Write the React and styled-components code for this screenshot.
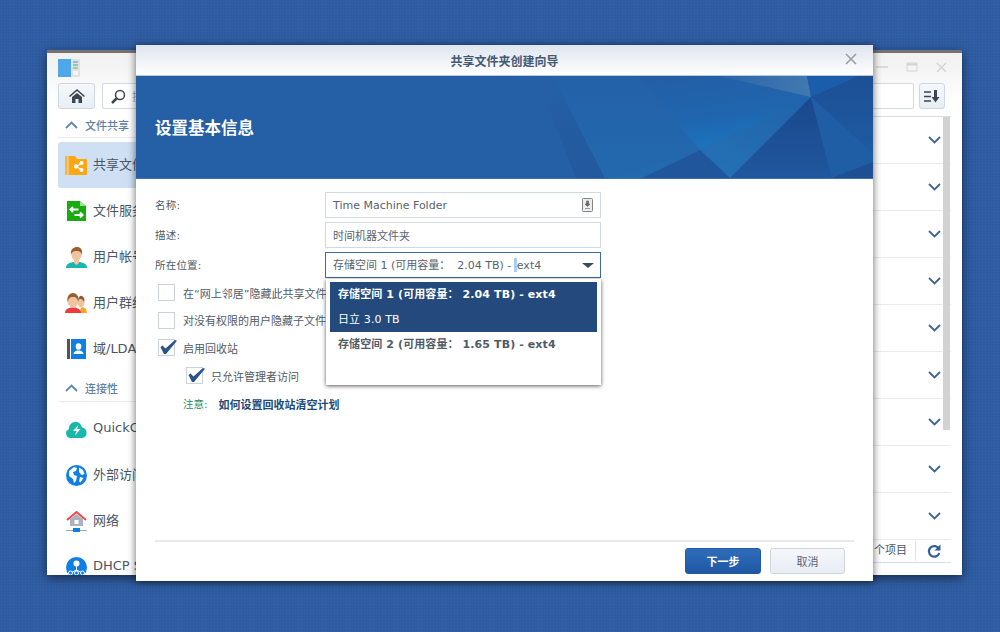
import React from "react";
import styled, { createGlobalStyle } from "styled-components";

const Global = createGlobalStyle`
  html, body { margin: 0; padding: 0; height: 100%; }
  body { font-family: "DejaVu Sans", "Noto Sans CJK SC", sans-serif; overflow: hidden; }
  #root { height: 100%; }
`;

const Desktop = styled.div`
  position: relative;
  width: 1000px;
  height: 632px;
  overflow: hidden;
  background-color: #2d5ba1;
  background-image: radial-gradient(rgba(255,255,255,.025) 1px, transparent 1.2px);
  background-size: 3px 3px;
`;

const BackWindow = styled.section`
  position: absolute;
  left: 47px;
  top: 50px;
  width: 915px;
  height: 525px;
  box-sizing: border-box;
  border-top: 3px solid #737373;
  background: linear-gradient(#f0f0f0, #fff 50px);
  box-shadow: 0 3px 10px rgba(0,0,0,.55);
  display: flex;
  flex-direction: column;
  overflow: hidden;
`;
const WinHeader = styled.header`
  height: 30px;
  flex: none;
  display: flex;
  align-items: center;
  justify-content: space-between;
  padding: 0 15px 0 11px;
`;
const WinControls = styled.div`
  display: flex;
  align-items: center;
  gap: 18px;
  padding-bottom: 2px;
`;
const Toolbar = styled.div`
  height: 26px;
  flex: none;
  display: flex;
  gap: 7px;
  padding: 0 17px 0 11px;
`;
const ToolButton = styled.button`
  width: ${p => p.$w}px;
  height: 26px;
  padding: 0;
  flex: none;
  margin-left: ${p => p.$ml || 0}px;
  border: 1px solid #cdd7e4;
  border-radius: 3px;
  background: linear-gradient(#f5f8fc, #e9eef5);
  display: flex;
  align-items: center;
  justify-content: center;
`;
const SearchBox = styled.div`
  flex: 1;
  height: 26px;
  box-sizing: border-box;
  border: 1px solid #d2dae5;
  border-radius: 2px;
  background: #fff;
  display: flex;
  align-items: center;
  gap: 6px;
  padding-left: 8px;
  font-size: 11px;
  color: #9aa3ad;
`;
const Main = styled.div`
  flex: 1;
  min-height: 0;
  display: flex;
`;
const Sidebar = styled.nav`
  width: 300px;
  flex: none;
  padding-left: 11px;
  box-sizing: border-box;
`;
const SideHead = styled.div`
  height: 29px;
  box-sizing: border-box;
  padding-top: ${p => (p.$first ? 3 : 2)}px;
  margin: ${p => (p.$first ? 0 : 1)}px 0 4px;
  display: flex;
  align-items: center;
  gap: 7px;
  padding-left: 7px;
  border-bottom: 1px solid #e8ebef;
  font-size: 11px;
  font-weight: 500;
  color: #5f7f9f;
`;
const SideItem = styled.div`
  height: 46px;
  display: flex;
  align-items: center;
  gap: 6px;
  padding-left: 7px;
  font-size: 13px;
  color: #4c5663;
  white-space: nowrap;
  border-radius: 3px 0 0 3px;
  background: ${p => (p.$active ? "#cfe0f5" : "transparent")};
`;
const SideLabel = styled.span`
  padding-bottom: 3px;
`;
const IconSlot = styled.span`
  width: 22px;
  height: 24px;
  flex: none;
  display: flex;
  align-items: center;
  justify-content: center;
`;
const Content = styled.div`
  position: relative;
  flex: 1;
  min-width: 0;
  margin: 7px 11px 0 0;
  display: flex;
  flex-direction: column;
`;
const List = styled.div`
  border-top: 1px solid #d3def0;
`;
const Row = styled.div`
  height: 47px;
  box-sizing: border-box;
  border-bottom: 1px solid #e8ecf2;
  display: flex;
  align-items: center;
  justify-content: flex-end;
  padding-right: 10px;
`;
const Scrollbar = styled.div`
  position: absolute;
  top: 1px;
  right: 1px;
  width: 7px;
  height: 313px;
  background: #d2d2d2;
`;
const ListFooter = styled.div`
  height: 23px;
  box-sizing: border-box;
  border-bottom: 1px solid #d3def0;
  display: flex;
  align-items: center;
  justify-content: flex-end;
  font-size: 11px;
  color: #4c5663;
  padding-right: 10px;
`;
const FooterCount = styled.span`
  padding-right: 8px;
  margin-right: 11px;
  border-right: 1px solid #dfe3e8;
  line-height: 20px;
`;

const Dialog = styled.section`
  position: absolute;
  left: 136px;
  top: 45px;
  width: 737px;
  height: 536px;
  background: #fff;
  box-shadow: 0 1px 8px rgba(0,0,0,.6);
  display: flex;
  flex-direction: column;
  color: #4f5a66;
`;
const DialogTitle = styled.header`
  position: relative;
  height: 31px;
  flex: none;
  box-sizing: border-box;
  border-bottom: 1px solid #b9cbe2;
  background: linear-gradient(#dfe5ee, #fff);
  display: flex;
  align-items: center;
  justify-content: center;
  font-size: 12px;
  font-weight: 700;
  color: #445a73;
`;
const CloseBtn = styled.span`
  position: absolute;
  right: 15px;
  top: 7px;
  display: flex;
`;
const Banner = styled.div`
  position: relative;
  height: 102px;
  flex: none;
  background: #2560a6;
  display: flex;
  align-items: center;
  padding-left: 19px;
  border-bottom: 1px solid #3f70ae;
`;
const BannerArt = styled.svg`
  position: absolute;
  inset: 0;
  width: 100%;
  height: 100%;
`;
const BannerTitle = styled.h1`
  position: relative;
  margin: 0;
  font-size: 16.5px;
  font-weight: 700;
  color: #fff;
`;
const Body = styled.div`
  flex: 1;
  min-height: 0;
  padding: 13px 19px 0;
`;
const FieldRow = styled.div`
  display: flex;
  align-items: center;
  height: 26px;
  margin-bottom: 4px;
`;
const FieldLabel = styled.label`
  width: 170px;
  flex: none;
  font-size: 10.5px;
  letter-spacing: .2px;
  color: #4f5a66;
  padding-bottom: ${p => p.$pb || 2}px;
`;
const Field = styled.div`
  position: relative;
  width: 276px;
  height: 26px;
  box-sizing: border-box;
  border: 1px solid ${p => (p.$focus ? "#3f6c9f" : "#d3d9e1")};
  display: flex;
  align-items: center;
  justify-content: space-between;
  padding: 0 ${p => (p.$focus ? 6 : 7)}px 0 7px;
  font-size: 11px;
  color: #59636e;
  white-space: pre;
`;
const FieldText = styled.span`
  padding: ${p => p.$pad || "0"};
`;
const Caret = styled.span`
  width: 0;
  height: 0;
  border-left: 6px solid transparent;
  border-right: 6px solid transparent;
  border-top: 5px solid #3c4a5a;
`;
const TextCursor = styled.span`
  display: inline-block;
  width: 3px;
  height: 14px;
  margin: 0 0 0 -1px;
  vertical-align: -3px;
  background: #a9cdf5;
`;
const Dropdown = styled.div`
  position: absolute;
  z-index: 2;
  left: 0;
  top: 26px;
  width: 275px;
  height: 106px;
  box-sizing: border-box;
  padding: 3px 4px;
  background: #fff;
  box-shadow: 0 1px 4px rgba(0,0,0,.65);
`;
const Highlight = styled.div`
  background: #24497c;
`;
const Option = styled.div`
  height: ${p => p.$h}px;
  box-sizing: border-box;
  display: flex;
  align-items: center;
  padding: 0 0 3px 8px;
  font-size: 11px;
  letter-spacing: .1px;
  font-weight: ${p => (p.$plain ? 400 : 700)};
  color: ${p => (p.$light ? "#fff" : "#515b67")};
  white-space: pre;
`;
const Checks = styled.div`
  margin-top: -3px;
`;
const CheckRow = styled.div`
  height: 27.6px;
  display: flex;
  align-items: center;
  gap: 8px;
  padding-left: ${p => (p.$sub ? 31 : 3)}px;
  font-size: 11px;
  color: #515b67;
  white-space: nowrap;
`;
const Box = styled.span`
  position: relative;
  width: 17px;
  height: 17px;
  box-sizing: border-box;
  flex: none;
  border: 1px solid #ccd2da;
  background: #fff;
`;
const Tick = styled.svg`
  position: absolute;
  left: 0;
  top: -1px;
  width: 19px;
  height: 17px;
`;
const Note = styled.div`
  display: flex;
  gap: 11px;
  height: 28px;
  align-items: center;
  padding: 1px 0 0 28px;
  box-sizing: border-box;
  font-size: 11px;
`;
const NoteTag = styled.span`
  color: #2a8a5f;
  font-size: 10.5px;
`;
const NoteLink = styled.span`
  color: #234a78;
  font-weight: 700;
`;
const DialogFooter = styled.footer`
  flex: none;
  height: 41px;
  margin: 0 19px;
  box-sizing: border-box;
  border-top: 2px solid #e8e8e8;
  display: flex;
  justify-content: flex-end;
  gap: 9px;
  padding: 6px 9px 0 0;
`;
const Btn = styled.button`
  width: ${p => p.$w}px;
  height: 26px;
  padding: 0;
  border-radius: 3px;
  font-family: inherit;
  font-size: 11px;
  border: 1px solid ${p => (p.$primary ? "#2159a6" : "#ccd6e3")};
  background: ${p => (p.$primary ? "linear-gradient(#2f6dbb, #1f57a2)" : "linear-gradient(#f5f7fb, #e8edf4)")};
  color: ${p => (p.$primary ? "#fff" : "#5b6570")};
  font-weight: ${p => (p.$primary ? 700 : 400)};
`;

const Chevron = ({ up }) => (
  <svg width="13" height="8" viewBox="0 0 13 8" fill="none" stroke={up ? "#5f87ad" : "#3d6593"} strokeWidth="1.8">
    <path d={up ? "M1 7l5.5-5.5L12 7" : "M1 1l5.5 5.5L12 1"} />
  </svg>
);

const FolderIcon = () => (
  <svg width="22" height="19" viewBox="0 0 22 19">
    <path d="M0 0h2.500v19H0z" fill="#ffb52e" />
    <path d="M3.500 0H10l2 3h9a1 1 0 0 1 1 1v14a1 1 0 0 1-1 1H3.500z" fill="#ffa711" />
    <g stroke="#fff" strokeWidth="1.100" fill="#fff">
      <path d="M16.500 7l-5 3.500 5 3.500" fill="none" />
      <circle cx="11" cy="10.500" r="1.600" />
      <circle cx="16.500" cy="7" r="1.400" />
      <circle cx="16.500" cy="14" r="1.400" />
    </g>
  </svg>
);
const FileServiceIcon = () => (
  <svg width="19" height="20" viewBox="0 0 19 20">
    <path d="M0 0h13l6 5v15H0z" fill="#1aab10" />
    <path d="M13 0l6 5h-6z" fill="#a5e2a0" />
    <path d="M3.500 8.500h8M6 6L3.500 8.500 6 11M7.500 14h8M13 11.500l2.500 2.500-2.500 2.500" stroke="#fff" strokeWidth="2" fill="none" />
  </svg>
);
const UserIcon = () => (
  <svg width="21" height="21" viewBox="0 0 21 21">
    <path d="M0 21c0-4 3-5 7-6h7c4 1 7 2 7 6z" fill="#19b6ac" />
    <path d="M8 12h5v4l-2.500 2L8 16z" fill="#efc3a0" />
    <ellipse cx="10.500" cy="7.500" rx="5" ry="6.500" fill="#efc3a0" />
    <path d="M5 8C4 2 8 0 11 0s6 2 5 8c-1-3-2-4-5.500-4S6 5 5 8z" fill="#9a5c32" />
  </svg>
);
const GroupIcon = () => (
  <svg width="22" height="20" viewBox="0 0 22 20">
    <path d="M14 20l2-5 2-1 3 2 1 4z" fill="#f5a623" />
    <ellipse cx="16" cy="9.500" rx="3.500" ry="5" fill="#efc3a0" />
    <path d="M13 7c1-3 2-5 4-4s3 3 2 6c-1-2-2-3-3-3s-2 0-3 1z" fill="#8b5a33" />
    <path d="M0 20c0-3 2-5 6-5.500h4c3 .5 6 2.500 6 5.500z" fill="#ec3a3e" />
    <ellipse cx="8" cy="8" rx="5.500" ry="6.500" fill="#efc3a0" />
    <path d="M2.500 9C1.500 3 5 0 8 0s6.500 3 5.500 9c-1-3-2-5-5.500-5S3.500 6 2.500 9z" fill="#9a5c32" />
  </svg>
);
const DomainIcon = () => (
  <svg width="19" height="20" viewBox="0 0 19 20">
    <path d="M0 0h3v20H0z" fill="#4c5663" />
    <path d="M4 0h15v20H4z" fill="#0f7fe6" />
    <ellipse cx="11.500" cy="7.500" rx="2.800" ry="3.200" fill="#fff" />
    <path d="M6.500 15c0-2 2-3 3.500-3.500h3c1.500.5 3.500 1.500 3.500 3.500z" fill="#fff" />
  </svg>
);
const CloudIcon = () => (
  <svg width="21" height="17" viewBox="0 0 21 17">
    <path d="M4.500 17a4.500 4.500 0 0 1-1.500-8.700 6.500 6.500 0 0 1 13-1.800A5.300 5.300 0 0 1 16 17z" fill="#17b8ac" />
    <path d="M12.500 4L7 10h3.500L9 14.500l5.500-6.500H11z" fill="#fff" />
  </svg>
);
const GlobeIcon = () => (
  <svg width="21" height="21" viewBox="0 0 21 21">
    <circle cx="10.500" cy="10.500" r="10.500" fill="#0f7fe6" />
    <path d="M3 6l5-4 3 1-1 3-3 1 1 3 3 1-1 5-2 2-1-4-4-3zM13 2.500l4 2.500 1.500 4-3 1-2.500-3zM14 12l3.500 1-3 4.500-1.500-1z" fill="#fff" />
  </svg>
);
const NetworkIcon = () => (
  <svg width="21" height="21" viewBox="0 0 21 21">
    <path d="M4 8l6.500-5L17 8v7H4z" fill="#aab4bf" />
    <path d="M1 9l9.500-8L20 9" fill="none" stroke="#f0474a" strokeWidth="2" />
    <rect x="8.500" y="9" width="4" height="4" fill="#fff" />
    <path d="M0 19.500h21" stroke="#9aa8b8" strokeWidth="1" />
    <rect x="7" y="17" width="7" height="4" fill="#0f7fe6" />
  </svg>
);
const DhcpIcon = () => (
  <svg width="21" height="21" viewBox="0 0 21 21">
    <circle cx="10.500" cy="10.500" r="10.500" fill="#0f7fe6" />
    <circle cx="10.500" cy="6.500" r="3" fill="#fff" />
    <path d="M10.500 9v5M4.500 16l6-3 6 3" stroke="#fff" strokeWidth="1" fill="none" />
    <g fill="#0f7fe6" stroke="#fff"><circle cx="4.500" cy="16" r="2" /><circle cx="10.500" cy="16" r="2" /><circle cx="16.500" cy="16" r="2" /></g>
  </svg>
);

const sections = [
  { title: "文件共享", items: [
    { label: "共享文件夹", icon: <FolderIcon />, active: true },
    { label: "文件服务", icon: <FileServiceIcon /> },
    { label: "用户帐号", icon: <UserIcon /> },
    { label: "用户群组", icon: <GroupIcon /> },
    { label: "域/LDAP", icon: <DomainIcon /> },
  ]},
  { title: "连接性", items: [
    { label: "QuickConnect", icon: <CloudIcon /> },
    { label: "外部访问", icon: <GlobeIcon /> },
    { label: "网络", icon: <NetworkIcon /> },
    { label: "DHCP Server", icon: <DhcpIcon /> },
  ]},
];

const art = [
  ["400,0 417,0 469,102 440,102", "url(#gLeft)"],
  ["417,0 501,0 564,74 469,102", "url(#gFace)"],
  ["501,0 584,0 675,21 564,74", "url(#gMain)"],
  ["584,0 671,0 675,21", "url(#gTop)"],
  ["671,0 722,0 675,21", "#1a5dab"],
  ["722,0 737,0 737,78 675,21", "url(#gRight)"],
  ["675,21 564,74 594,102", "url(#gMid)"],
  ["564,74 506,102 594,102", "#20569b"],
  ["564,74 469,102 506,102", "#2269ae"],
  ["675,21 594,102 696,102", "url(#gDark)"],
  ["675,21 696,102 737,86 737,78", "#1f5ea4"],
  ["696,102 737,86 737,102", "#1d4f92"],
];

const Tickmark = () => (
  <Tick viewBox="0 0 19 17">
    <path d="M1.500 8l2-1.500 3 3L16 1l2 .8L7 15H5z" fill="#2a5489" />
  </Tick>
);

export default function App() {
  return (
    <Desktop>
      <Global />
      <BackWindow>
        <WinHeader>
          <svg width="22" height="20" viewBox="0 0 22 20">
            <rect width="13" height="18" y="1" fill="#4ea7e8" />
            <rect x="13" y="1" width="9" height="18" fill="#dfe3e6" />
            <path d="M15 4h5M15 7h5" stroke="#77b7c7" strokeWidth="1.500" />
            <path d="M15 10h5" stroke="#8fc96c" strokeWidth="1.500" />
            <rect x="15" y="13" width="5" height="4" fill="#f5f5f5" />
          </svg>
          <WinControls>
            <svg width="12" height="10" viewBox="0 0 12 10"><path d="M0 5h12" stroke="#d2d2d2" strokeWidth="1.500" /></svg>
            <svg width="12" height="10" viewBox="0 0 12 10"><path d="M1 1h10v8H1z" fill="none" stroke="#d2d2d2" /><path d="M1 2.500h10" stroke="#d2d2d2" strokeWidth="2" /></svg>
            <svg width="11" height="11" viewBox="0 0 12 12"><path d="M1 1l10 10M11 1L1 11" stroke="#d2d2d2" strokeWidth="1.500" /></svg>
          </WinControls>
        </WinHeader>
        <Toolbar>
          <ToolButton $w={37}>
            <svg width="16" height="14" viewBox="0 0 16 14">
              <path d="M0 7l8-7 8 7-1 1-7-6-7 6z" fill="#3d4650" />
              <path d="M3 8l5-4 5 4v6H9.500v-4h-3v4H3z" fill="#3d4650" />
            </svg>
          </ToolButton>
          <SearchBox>
            <svg width="15" height="15" viewBox="0 0 15 15" fill="none" stroke="#3d4650">
              <circle cx="9" cy="6" r="4.500" strokeWidth="1.500" />
              <path d="M5.500 9.500L1 14" strokeWidth="2.500" />
            </svg>
            搜索
          </SearchBox>
          <ToolButton $w={26} $ml={-2}>
            <svg width="16" height="13" viewBox="0 0 16 13">
              <path d="M0 2h7M0 6.500h7M0 11h7" stroke="#3d4650" strokeWidth="1.500" />
              <path d="M10 0h3v7h2.500l-4 5.500-4-5.500H10z" fill="#3d4650" />
            </svg>
          </ToolButton>
        </Toolbar>
        <Main>
          <Sidebar>
            {sections.map((s, i) => (
              <div key={s.title}>
                <SideHead $first={i === 0}><Chevron up />{s.title}</SideHead>
                {s.items.map(it => (
                  <SideItem key={it.label} $active={it.active}>
                    <IconSlot>{it.icon}</IconSlot>
                    <SideLabel>{it.label}</SideLabel>
                  </SideItem>
                ))}
              </div>
            ))}
          </Sidebar>
          <Content>
            <List>
              {Array.from({ length: 9 }, (_, i) => (
                <Row key={i}><Chevron /></Row>
              ))}
            </List>
            <Scrollbar />
            <ListFooter>
              <FooterCount>9 个项目</FooterCount>
              <svg width="14" height="14" viewBox="0 0 14 14" fill="none">
                <path d="M12 5A5.300 5.300 0 1 0 12.300 9" stroke="#2f5f96" strokeWidth="2.200" />
                <path d="M13.500 0.500v6h-6z" fill="#2f5f96" />
              </svg>
            </ListFooter>
          </Content>
        </Main>
      </BackWindow>

      <Dialog>
        <DialogTitle>
          共享文件夹创建向导
          <CloseBtn>
            <svg width="14" height="14" viewBox="0 0 14 14"><path d="M2 2l10 10M12 2L2 12" stroke="#9a9ea4" strokeWidth="1.600" /></svg>
          </CloseBtn>
        </DialogTitle>
        <Banner>
          <BannerArt viewBox="0 0 737 102" preserveAspectRatio="none">
            <defs>
              <linearGradient id="gLeft" x1="0" y1="0" x2="0" y2="1">
                <stop offset="0" stopColor="#2560a6" />
                <stop offset="1" stopColor="#22589e" />
              </linearGradient>
              <linearGradient id="gFace" x1="0" y1="0" x2="0" y2="1">
                <stop offset="0" stopColor="#2361a8" />
                <stop offset="1" stopColor="#2369ae" />
              </linearGradient>
              <linearGradient id="gMain" x1="0.100" y1="0" x2="0.450" y2="1">
                <stop offset="0" stopColor="#245ea5" />
                <stop offset="0.600" stopColor="#1f66af" />
                <stop offset="1" stopColor="#1b75be" />
              </linearGradient>
              <linearGradient id="gTop" x1="0" y1="0" x2="1" y2="0">
                <stop offset="0" stopColor="#2b66aa" />
                <stop offset="1" stopColor="#4179b0" />
              </linearGradient>
              <linearGradient id="gRight" x1="0" y1="0" x2="0" y2="1">
                <stop offset="0" stopColor="#1c4f96" />
                <stop offset="1" stopColor="#1e5ba1" />
              </linearGradient>
              <linearGradient id="gMid" x1="1" y1="0" x2="0.300" y2="1">
                <stop offset="0" stopColor="#2163aa" />
                <stop offset="1" stopColor="#2470b4" />
              </linearGradient>
              <linearGradient id="gDark" x1="0" y1="0" x2="0" y2="1">
                <stop offset="0" stopColor="#1a488d" />
                <stop offset="1" stopColor="#20579e" />
              </linearGradient>
            </defs>
            {art.map(([pts, fill]) => <polygon key={pts} points={pts} fill={fill} />)}
          </BannerArt>
          <BannerTitle>设置基本信息</BannerTitle>
        </Banner>
        <Body>
          <FieldRow>
            <FieldLabel>名称:</FieldLabel>
            <Field>
              <FieldText $pad="1px 0 0">Time Machine Folder</FieldText>
              <svg width="11" height="14" viewBox="0 0 11 14">
                <rect x="0.500" y="0.500" width="10" height="13" rx="1" fill="#ececec" stroke="#858585" />
                <path d="M4.500 3h2v3h1.500L5.500 8.500 3 6h1.500zM3 10.500h5" fill="#666" stroke="#666" strokeWidth=".6" />
              </svg>
            </Field>
          </FieldRow>
          <FieldRow>
            <FieldLabel $pb={1}>描述:</FieldLabel>
            <Field>时间机器文件夹</Field>
          </FieldRow>
          <FieldRow>
            <FieldLabel>所在位置:</FieldLabel>
            <Field $focus>
              <FieldText $pad="0 0 2px">存储空间 1 (可用容量：  2.04 TB) - <TextCursor />ext4</FieldText>
              <Caret />
              <Dropdown>
                <Highlight>
                  <Option $h={24} $light>存储空间 1 (可用容量： 2.04 TB) - ext4</Option>
                  <Option $h={26} $light $plain>日立 3.0 TB</Option>
                </Highlight>
                <Option $h={25}>存储空间 2 (可用容量： 1.65 TB) - ext4</Option>
              </Dropdown>
            </Field>
          </FieldRow>
          <Checks>
            <CheckRow><Box />在“网上邻居”隐藏此共享文件夹</CheckRow>
            <CheckRow><Box />对没有权限的用户隐藏子文件夹</CheckRow>
            <CheckRow><Box><Tickmark /></Box>启用回收站</CheckRow>
            <CheckRow $sub><Box><Tickmark /></Box>只允许管理者访问</CheckRow>
            <Note>
              <NoteTag>注意:</NoteTag>
              <NoteLink>如何设置回收站清空计划</NoteLink>
            </Note>
          </Checks>
        </Body>
        <DialogFooter>
          <Btn $primary $w={76}>下一步</Btn>
          <Btn $w={75}>取消</Btn>
        </DialogFooter>
      </Dialog>
    </Desktop>
  );
}
